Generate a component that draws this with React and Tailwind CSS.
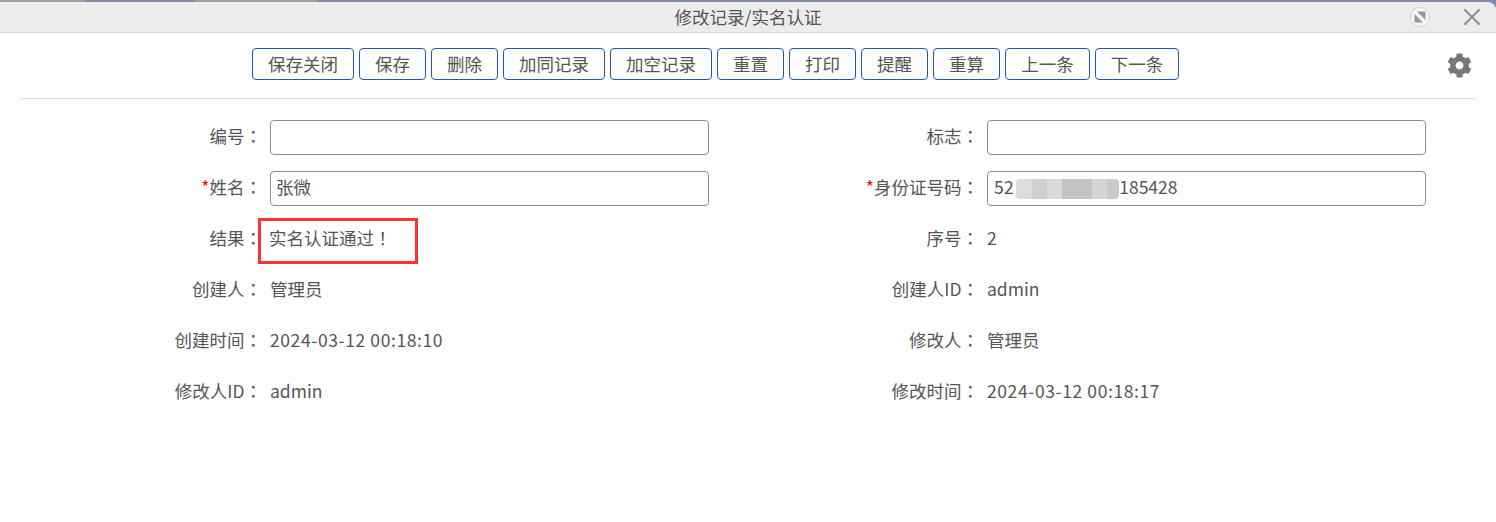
import { X } from 'lucide-react';
import { FaCog } from 'react-icons/fa';

const FONT = "font-['Noto_Sans_CJK_SC',sans-serif]";

const buttons = [
    ['保存关闭', 'w-[102px]'],
    ['保存', 'w-[67px]'],
    ['删除', 'w-[67px]'],
    ['加同记录', 'w-[102px]'],
    ['加空记录', 'w-[102px]'],
    ['重置', 'w-[67px]'],
    ['打印', 'w-[67px]'],
    ['提醒', 'w-[67px]'],
    ['重算', 'w-[67px]'],
    ['上一条', 'w-[85px]'],
    ['下一条', 'w-[84px]'],
];

// the TC font centres full-width punctuation in its box, as the original does
function Punct({ children }) {
    return <span className="font-['Noto_Sans_CJK_TC',sans-serif]">{children}</span>;
}

function Row({ label, required, children }) {
    return (
        <div className="flex h-[51px] items-center">
            <div className="w-[270px] pr-[8px] pb-[2px] text-right whitespace-nowrap">
                {required && <span className="text-[#f00]">*</span>}
                {label}
                <Punct>：</Punct>
            </div>
            <div className="w-[439px]">{children}</div>
        </div>
    );
}

function Field({ children }) {
    return (
        <div className="flex h-[35px] w-[439px] items-center rounded-[4px] border border-[#8c8c8c] bg-white px-[6px] pb-[2px]">
            {children}
        </div>
    );
}

function Value({ children, wide }) {
    return <div className={`pb-[2px] ${wide ? 'tracking-[0.6px]' : ''}`}>{children}</div>;
}

export default function App() {
    return (
        <div className={`${FONT} h-[522px] w-[1496px] overflow-hidden bg-white text-[17.5px] text-[#555]`}>
            <div className="flex h-[2px]">
                <div className="w-[85px] bg-[#a3a19e]" />
                <div className="w-[110px] bg-[#7f8aa5]" />
                <div className="w-[122px] bg-[#a3a19e]" />
                <div className="flex-1 bg-[#7f8aa5]" />
            </div>
            <div className="bg-[#7f8aa5]">
                <div className="relative flex h-[31px] items-center justify-center rounded-tr-[8px] border-b border-[#d6d6d6] bg-[#ececec]">
                    <span>修改记录/实名认证</span>
                    <div className="absolute right-[66px] top-[5px] h-[20px] w-[20px] rounded-full border border-[#d4d4d4] bg-[#f6f6f6]">
                        <svg viewBox="0 0 18 18" className="h-full w-full">
                            <path d="M3.5 6v8.5H12z M14.5 12V3.5H6z" fill="#999" />
                        </svg>
                    </div>
                    <X className="absolute right-[10px] top-[1px] h-[28px] w-[28px] text-[#8f8f8f]" strokeWidth={1.8} />
                </div>
            </div>

            <div className="relative flex h-[65px] items-center pb-[4px] pl-[252px]">
                <div className="flex gap-[5px]">
                    {buttons.map(([text, width]) => (
                        <button
                            key={text}
                            className={`${width} h-[32px] rounded-[4px] border border-[#1d5ab0] bg-white pt-[1px] text-[#555]`}
                        >
                            {text}
                        </button>
                    ))}
                </div>
                <FaCog className="absolute right-[24px] top-[20px] h-[25px] w-[25px] text-[#777]" />
            </div>

            <div className="mx-[18px] h-[5px] rounded-t-[5px] border-t border-[#ddd]" />

            <div className="mt-[9px] grid grid-cols-[717px_717px]">
                <Row label="编号"><Field /></Row>
                <Row label="标志"><Field /></Row>
                <Row label="姓名" required><Field><span className="-ml-[1px]">张微</span></Field></Row>
                <Row label="身份证号码" required>
                    <Field>
                        <span className="tracking-[0.4px]">52</span>
                        <span className="ml-[2px] mt-[2px] flex h-[20px] w-[103px] shrink-0 overflow-hidden rounded-[4px]">
                            <span className="w-[16px] bg-[#dcdcdc]" />
                            <span className="w-[15px] bg-[#cfcfcf]" />
                            <span className="w-[15px] bg-[#dadada]" />
                            <span className="w-[30px] bg-[#c4c4c4]" />
                            <span className="w-[15px] bg-[#d6d6d6]" />
                            <span className="w-[12px] bg-[#c9c9c9]" />
                        </span>
                        <span>185428</span>
                    </Field>
                </Row>
                <Row label="结果">
                    <div className="relative -ml-[1px] pb-[2px]">
                        实名认证通过<Punct>！</Punct>
                        <div className="absolute left-[-11px] top-[-7px] h-[46px] w-[160px] border-[3px] border-[#f33]" />
                    </div>
                </Row>
                <Row label="序号"><Value>2</Value></Row>
                <Row label="创建人"><Value>管理员</Value></Row>
                <Row label="创建人ID"><Value>admin</Value></Row>
                <Row label="创建时间"><Value wide>2024-03-12 00:18:10</Value></Row>
                <Row label="修改人"><Value>管理员</Value></Row>
                <Row label="修改人ID"><Value>admin</Value></Row>
                <Row label="修改时间"><Value wide>2024-03-12 00:18:17</Value></Row>
            </div>
        </div>
    );
}
